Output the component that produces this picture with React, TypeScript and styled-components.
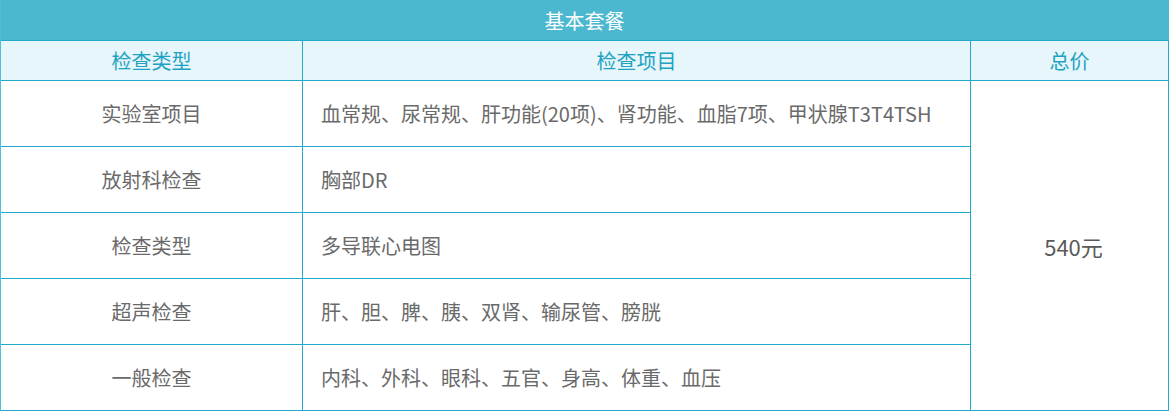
import React from "react";
import styled, { createGlobalStyle } from "styled-components";

const Global = createGlobalStyle`
  html, body { margin: 0; padding: 0; background: #ffffff; }
  body { font-family: "Noto Sans CJK SC", "Noto Sans", sans-serif; }
`;

const LINE = "#22aacb";

const Table = styled.table`
  width: 1169px;
  table-layout: fixed;
  border-collapse: separate;
  border-spacing: 0;
  border-left: 1px solid #4cc0d8;
  font-size: 20px;
  color: #6a6a6a;
`;

const TitleCell = styled.th`
  box-sizing: border-box;
  height: 41px;
  padding: 0;
  background: #4cb8cf;
  color: #ffffff;
  font-weight: 400;
  font-size: 20px;
  text-align: center;
  border-bottom: 1px solid ${LINE};
  border-right: 1px solid #4cb8cf;
`;

const HeadCell = styled.th`
  box-sizing: border-box;
  height: 40px;
  padding: 0;
  background: #e6f6fa;
  color: #1ea2c3;
  font-weight: 400;
  text-align: center;
  border-bottom: 1px solid ${LINE};
  border-right: 1px solid ${LINE};
`;

const Cell = styled.td<{ $align?: "left" | "center" }>`
  box-sizing: border-box;
  height: 66px;
  padding: 0 0 0 ${(p) => (p.$align === "left" ? "18px" : "0")};
  text-align: ${(p) => p.$align ?? "center"};
  vertical-align: middle;
  border-bottom: 1px solid ${LINE};
  border-right: 1px solid ${LINE};
  white-space: nowrap;
`;

const PriceCell = styled(Cell)`
  font-size: 22px;
  color: #5a5a5a;
  padding-left: 8px;
`;

const rows = [
  { type: "实验室项目", items: "血常规、尿常规、肝功能(20项)、肾功能、血脂7项、甲状腺T3T4TSH" },
  { type: "放射科检查", items: "胸部DR" },
  { type: "检查类型", items: "多导联心电图" },
  { type: "超声检查", items: "肝、胆、脾、胰、双肾、输尿管、膀胱" },
  { type: "一般检查", items: "内科、外科、眼科、五官、身高、体重、血压" },
];

export default function App() {
  return (
    <>
      <Global />
      <Table>
        <colgroup>
          <col style={{ width: 302 }} />
          <col style={{ width: 668 }} />
          <col style={{ width: 198 }} />
        </colgroup>
        <thead>
          <tr>
            <TitleCell colSpan={3}>基本套餐</TitleCell>
          </tr>
          <tr>
            <HeadCell>检查类型</HeadCell>
            <HeadCell>检查项目</HeadCell>
            <HeadCell>总价</HeadCell>
          </tr>
        </thead>
        <tbody>
          {rows.map((r, i) => (
            <tr key={i}>
              <Cell>{r.type}</Cell>
              <Cell $align="left">{r.items}</Cell>
              {i === 0 && <PriceCell rowSpan={rows.length}>540元</PriceCell>}
            </tr>
          ))}
        </tbody>
      </Table>
    </>
  );
}
